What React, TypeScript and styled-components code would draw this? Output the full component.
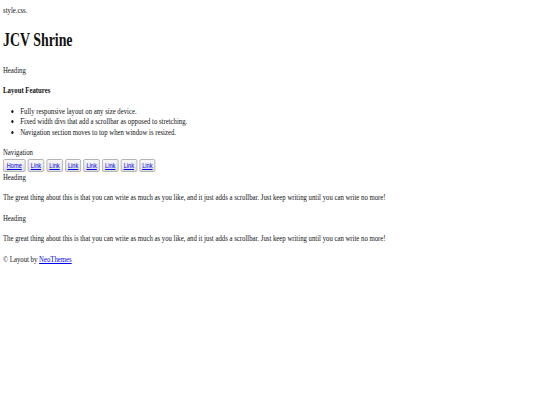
import React from 'react';
import styled, { createGlobalStyle } from 'styled-components';

const GlobalStyle = createGlobalStyle`
    html, body {
        margin: 0;
        padding: 0;
        background: #ffffff;
        overflow: hidden;
    }
    body {
        font-family: "Liberation Serif", "Times New Roman", serif;
        font-size: 9px;
        line-height: 10.5px;
        color: #111111;
    }
`;

// the shot is narrower than it is tall: squeeze the page sideways
const Page = styled.div`
    width: 720px;
    padding: 5px 4px;
    transform: scaleX(0.75);
    transform-origin: top left;
`;

const Title = styled.h1`
    font-size: 18.5px;
    line-height: 21px;
    font-weight: bold;
    margin: 14px 0;
`;

const Label = styled.div`
    font-size: 9px;
`;

const SectionTitle = styled.h4`
    font-size: 9px;
    font-weight: bold;
    margin: 10px 0;
`;

const FeatureList = styled.ul`
    margin: 10px 0;
    padding-left: 23px;
    list-style: disc;
`;

const NavBar = styled.div`
    display: flex;
    gap: 3px;
    margin: 1px 0 0;
`;

const NavButton = styled.button<{ $wide?: boolean }>`
    font-family: "Liberation Sans", Arial, sans-serif;
    font-size: 7.5px;
    line-height: 9px;
    padding: 1px ${(p) => (p.$wide ? '4px' : '3px')};
    border: 1px solid #a9a9a9;
    border-radius: 2px;
    background: linear-gradient(#f7f7f7, #dedede);

    a {
        color: #0000ee;
        text-decoration: underline;
    }
`;

const Paragraph = styled.p`
    margin: 10px 0;
`;

const Footer = styled.div`
    a {
        color: #0000ee;
        text-decoration: underline;
    }
`;

const features = [
    'Fully responsive layout on any size device.',
    'Fixed width divs that add a scrollbar as opposed to stretching.',
    'Navigation section moves to top when window is resized.',
];

const navItems = ['Home', 'Link', 'Link', 'Link', 'Link', 'Link', 'Link', 'Link'];

const bodyText =
    'The great thing about this is that you can write as much as you like, and it just adds a scrollbar. Just keep writing until you can write no more!';

const App = () => {
    return (
        <>
            <GlobalStyle />
            <Page>
                <Label>style.css.</Label>
                <Title>JCV Shrine</Title>
                <Label>Heading</Label>
                <SectionTitle>Layout Features</SectionTitle>
                <FeatureList>
                    {features.map((f) => (
                        <li key={f}>{f}</li>
                    ))}
                </FeatureList>
                <Label>Navigation</Label>
                <NavBar>
                    {navItems.map((item, i) => (
                        <NavButton key={i} $wide={i === 0}>
                            <a href="#">{item}</a>
                        </NavButton>
                    ))}
                </NavBar>
                <Label>Heading</Label>
                <Paragraph>{bodyText}</Paragraph>
                <Label>Heading</Label>
                <Paragraph>{bodyText}</Paragraph>
                <Footer>
                    © Layout by <a href="#">NeoThemes</a>
                </Footer>
            </Page>
        </>
    );
};

export default App;
